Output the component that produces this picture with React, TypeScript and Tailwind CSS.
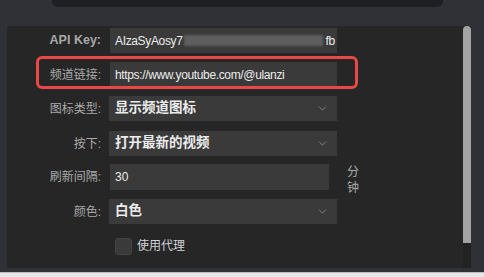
import { ChevronDown } from 'lucide-react';

const font = { fontFamily: '"Liberation Sans", "Noto Sans CJK SC", sans-serif' };

function Label({ text, bold }: { text: string; bold?: boolean }) {
  return (
    <div className={`w-[94px] shrink-0 text-right text-[#a9a9a9] ${bold ? 'text-[12.5px] font-bold' : 'text-[12px]'}`}>
      {text}
    </div>
  );
}

function Select({ value }: { value: string }) {
  return (
    <div className="w-[228px] h-[25px] bg-[#3a3a3a] flex items-center justify-between pl-[6px] pr-[8px]">
      <span className="text-[13.5px] font-bold text-[#ececec]">{value}</span>
      <ChevronDown size={13} strokeWidth={1.6} className="text-[#8c8c8c]" />
    </div>
  );
}

export default function App() {
  return (
    <div className="w-[484px] h-[277px] bg-[#303136] flex flex-col overflow-hidden" style={font}>
      <div className="ml-[52px] w-[391px] h-[7px] bg-[#1e1f22] rounded-b-[6px] shrink-0" />
      <div className="mt-[19px] ml-[7px] w-[464px] h-[242px] bg-[#262626] flex shrink-0">
        <div className="flex-1 relative flex flex-col pt-[2px] gap-[9px]">
          <div className="flex items-center gap-[9px]">
            <Label text="API Key:" bold />
            <div className="w-[227px] h-[25px] bg-[#3a3a3a] flex items-center pl-[5px] text-[12px] tracking-[-0.35px] text-[#ececec] overflow-hidden">
              <span>AIzaSyAosy7</span>
              <span className="inline-block w-[139px] h-[11px] ml-[1px] bg-[#5e5e5e] blur-[1px]" />
              <span className="ml-[3px]">fb</span>
            </div>
          </div>

          <div className="flex items-center gap-[9px]">
            <Label text="频道链接:" />
            <div className="w-[227px] h-[25px] bg-[#3a3a3a] flex items-center pl-[5px] text-[12px] tracking-[-0.35px] text-[#ececec]">
              https://www.youtube.com/@ulanzi
            </div>
          </div>
          <div className="absolute left-[29px] top-[30px] w-[322px] h-[33px] border-[3px] border-[#e94848] rounded-[6px]" />

          <div className="flex items-center gap-[8px]">
            <Label text="图标类型:" />
            <Select value="显示频道图标" />
          </div>

          <div className="flex items-center gap-[8px] mt-[1px]">
            <Label text="按下:" />
            <Select value="打开最新的视频" />
          </div>

          <div className="flex items-center gap-[9px] h-[26px] mt-[-1px]">
            <Label text="刷新间隔:" />
            <div className="w-[219px] h-[26px] bg-[#3a3a3a] flex items-center pl-[5px] text-[12px] text-[#ececec]">30</div>
            <div className="ml-[9px] w-[13px] text-[12px] leading-[16px] text-[#a9a9a9] self-start">分钟</div>
          </div>

          <div className="flex items-center gap-[8px]">
            <Label text="颜色:" />
            <Select value="白色" />
          </div>

          <div className="flex items-center gap-[5px] ml-[108px] mt-[4px]">
            <div className="w-[17px] h-[17px] rounded-[3px] bg-[#3a3a3a] border border-[#444]" />
            <span className="text-[12px] text-[#d2d5d9]">使用代理</span>
          </div>
        </div>
        <div className="w-[8px] bg-[#222222] flex flex-col">
          <div className="h-[217px] bg-[#a3a3a3] rounded-t-full rounded-b-[3px]" />
        </div>
      </div>
      <div className="mt-[4px] h-[5px] bg-[#e6e6e6] border-t border-[#bdbdbd] shrink-0" />
    </div>
  );
}
